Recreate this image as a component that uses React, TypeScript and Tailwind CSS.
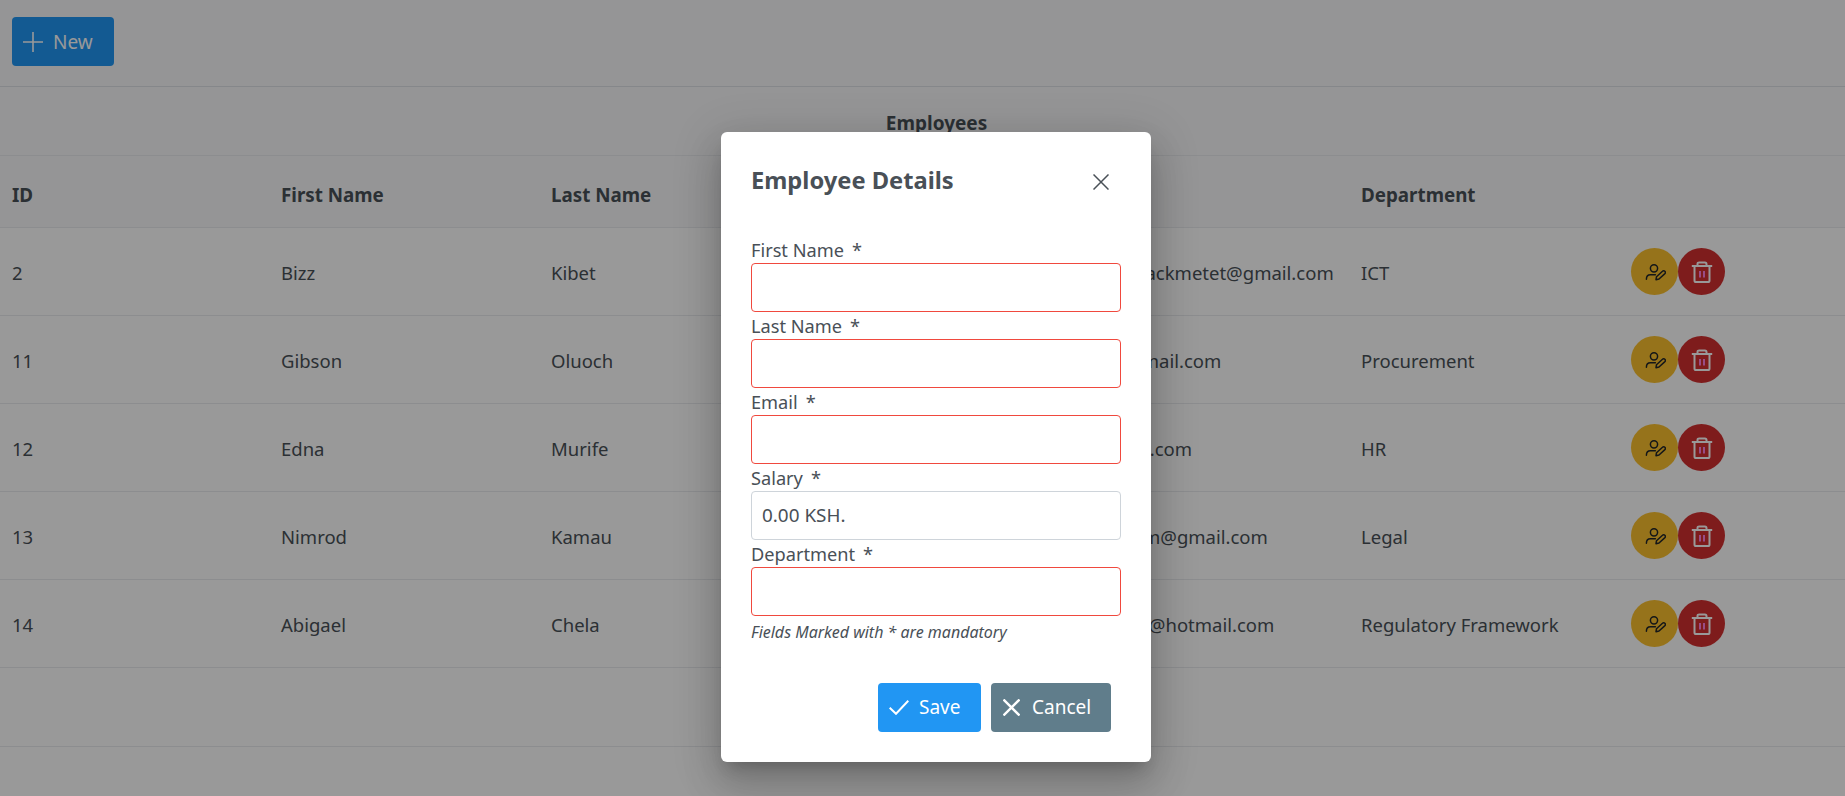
const rows = [
  { id: 2, first: "Bizz", last: "Kibet", salary: "85,000.00", email: "bizziblackmetet@gmail.com", dept: "ICT" },
  { id: 11, first: "Gibson", last: "Oluoch", salary: "60,000.00", email: "gb@gmail.com", dept: "Procurement" },
  { id: 12, first: "Edna", last: "Murife", salary: "70,000.00", email: "ed@ke.com", dept: "HR" },
  { id: 13, first: "Nimrod", last: "Kamau", salary: "90,000.00", email: "nimrom@gmail.com", dept: "Legal" },
  { id: 14, first: "Abigael", last: "Chela", salary: "75,000.00", email: "abigail@hotmail.com", dept: "Regulatory Framework" },
];

const columns = ["ID", "First Name", "Last Name", "Salary", "Email", "Department", ""];

function PlusIcon() {
  return (
    <svg viewBox="0 0 20 20" className="h-5 w-5" fill="none" stroke="currentColor" strokeWidth="1.6">
      <path d="M10 0v20M0 10h20" />
    </svg>
  );
}

function CloseIcon({ size, width }: { size: string; width: number }) {
  return (
    <svg viewBox="0 0 16 16" className={size} fill="none" stroke="currentColor" strokeWidth={width}>
      <path d="M.5.5l15 15M15.5.5l-15 15" />
    </svg>
  );
}

function CheckIcon() {
  return (
    <svg viewBox="0 0 20 15" className="h-[15px] w-5" fill="none" stroke="currentColor" strokeWidth="2">
      <path d="M.7 7.8l6.3 6 12.3-13" />
    </svg>
  );
}

function UserEditIcon() {
  return (
    <svg viewBox="0 0 22 22" className="h-[22px] w-[22px]" fill="none" stroke="currentColor" strokeWidth="1.5" strokeLinecap="round" strokeLinejoin="round">
      <circle cx="10" cy="7.3" r="3.6" />
      <path d="M2.4 18.3c0-3 1.4-4.5 4-4.5h5" />
      <path d="M12 18.7l.5-3 6-5.4a1.6 1.6 0 0 1 2.4 2.3l-5.9 5.4z" />
    </svg>
  );
}

function TrashIcon() {
  return (
    <svg viewBox="0 0 22 22" className="h-[22px] w-[22px]" fill="none" stroke="currentColor" strokeWidth="2" strokeLinejoin="round">
      <path d="M.8 5h20.4" />
      <path d="M6.5 5V3c0-1 .7-1.6 1.6-1.6h5.8c.9 0 1.6.6 1.6 1.6v2" />
      <path d="M3.5 5v14.4c0 1 .6 1.6 1.6 1.6h11.8c1 0 1.6-.6 1.6-1.6V5" />
      <path d="M9 10v6.5M13 10v6.5" stroke="#ff80e0" />
    </svg>
  );
}

function Field({ label, invalid, value }: { label: string; invalid?: boolean; value?: string }) {
  return (
    <div>
      <label className="block h-[27px] pt-[1px] text-[18.2px] leading-[27px] text-[#495057]">
        {label}
        <span className="ml-2">*</span>
      </label>
      <div
        className={`flex h-[49px] w-[370px] items-center rounded-[4px] border bg-white px-[10px] text-[18.9px] text-[#495057] ${
          invalid ? "border-[#f0493e]" : "border-[#ced4da]"
        }`}
      >
        {value}
      </div>
    </div>
  );
}

export default function App() {
  return (
    <div className="relative h-[796px] w-[1845px] overflow-hidden bg-white font-['Noto_Sans',sans-serif] text-[18.5px] text-[#495057]">
      {/* Toolbar */}
      <div className="h-[87px] border-b border-[#dee2e6] bg-[#f8f9fa] pl-3 pt-[17px]">
        <button className="flex h-[49px] w-[102px] items-center gap-[10px] rounded-[4px] bg-[#2196f3] pl-[11px] text-[19px] text-white">
          <PlusIcon />
          <span className="pt-[2px]">New</span>
        </button>
      </div>

      {/* Table */}
      <div className="flex h-[69px] items-center justify-center border-b border-[#e9ecef] bg-[#f8f9fa] pl-[28px] pt-[5px] text-[19px] font-bold">Employees</div>
      <div className="grid h-[72px] grid-cols-[269px_270px_270px_270px_270px_270px_1fr] items-center border-b border-[#e9ecef] bg-[#f8f9fa] pl-3 pt-[7px] text-[18.8px] font-bold">
        {columns.map((c) => (
          <div key={c}>{c}</div>
        ))}
      </div>
      {rows.map((r) => (
        <div key={r.id} className="grid h-[88px] grid-cols-[269px_270px_270px_270px_270px_270px_1fr] items-center border-b border-[#e9ecef] pl-3 pt-[2px]">
          <div>{r.id}</div>
          <div>{r.first}</div>
          <div>{r.last}</div>
          <div>{r.salary}</div>
          <div>{r.email}</div>
          <div>{r.dept}</div>
          <div className="-mt-[2px] flex">
            <button className="flex h-[47px] w-[47px] items-center justify-center rounded-full bg-[#fbc02d] text-[#212529]">
              <UserEditIcon />
            </button>
            <button className="flex h-[47px] w-[47px] items-center justify-center rounded-full bg-[#d32f2f] text-white">
              <TrashIcon />
            </button>
          </div>
        </div>
      ))}
      <div className="h-[79px] border-b border-[#e9ecef]" />

      {/* Dialog mask */}
      <div className="absolute inset-0 bg-black/40" />
      <div className="absolute left-[721px] top-[132px] h-[630px] w-[430px] rounded-[6px] bg-white shadow-[0_11px_15px_-7px_rgba(0,0,0,0.2),0_24px_38px_3px_rgba(0,0,0,0.14),0_9px_46px_8px_rgba(0,0,0,0.12)]">
        <div className="flex h-[104px] items-start justify-between pl-[30px] pr-[42px] pt-[30px]">
          <h2 className="text-[23.7px] font-bold leading-[36px] text-[#495057]">Employee Details</h2>
          <div className="pt-[12px]">
            <CloseIcon size="h-4 w-4" width={1.5} />
          </div>
        </div>
        <div className="flex flex-col px-[30px]">
          <Field label="First Name" invalid />
          <Field label="Last Name" invalid />
          <Field label="Email" invalid />
          <Field label="Salary" value="0.00 KSH." />
          <Field label="Department" invalid />
          <p className="mt-[3px] text-[16px] italic leading-[26px] text-[#495057]">Fields Marked with * are mandatory</p>
        </div>
        <div className="mt-[38px] flex justify-end gap-[10px] pr-[40px] text-[19px]">
          <button className="flex h-[49px] w-[103px] items-center gap-[10px] rounded-[4px] bg-[#2196f3] pl-[11px] text-white">
            <CheckIcon />
            Save
          </button>
          <button className="flex h-[49px] w-[120px] items-center gap-[12px] rounded-[4px] bg-[#607d8b] pl-[12px] text-white">
            <CloseIcon size="h-[17px] w-[17px]" width={2.2} />
            Cancel
          </button>
        </div>
      </div>
    </div>
  );
}
